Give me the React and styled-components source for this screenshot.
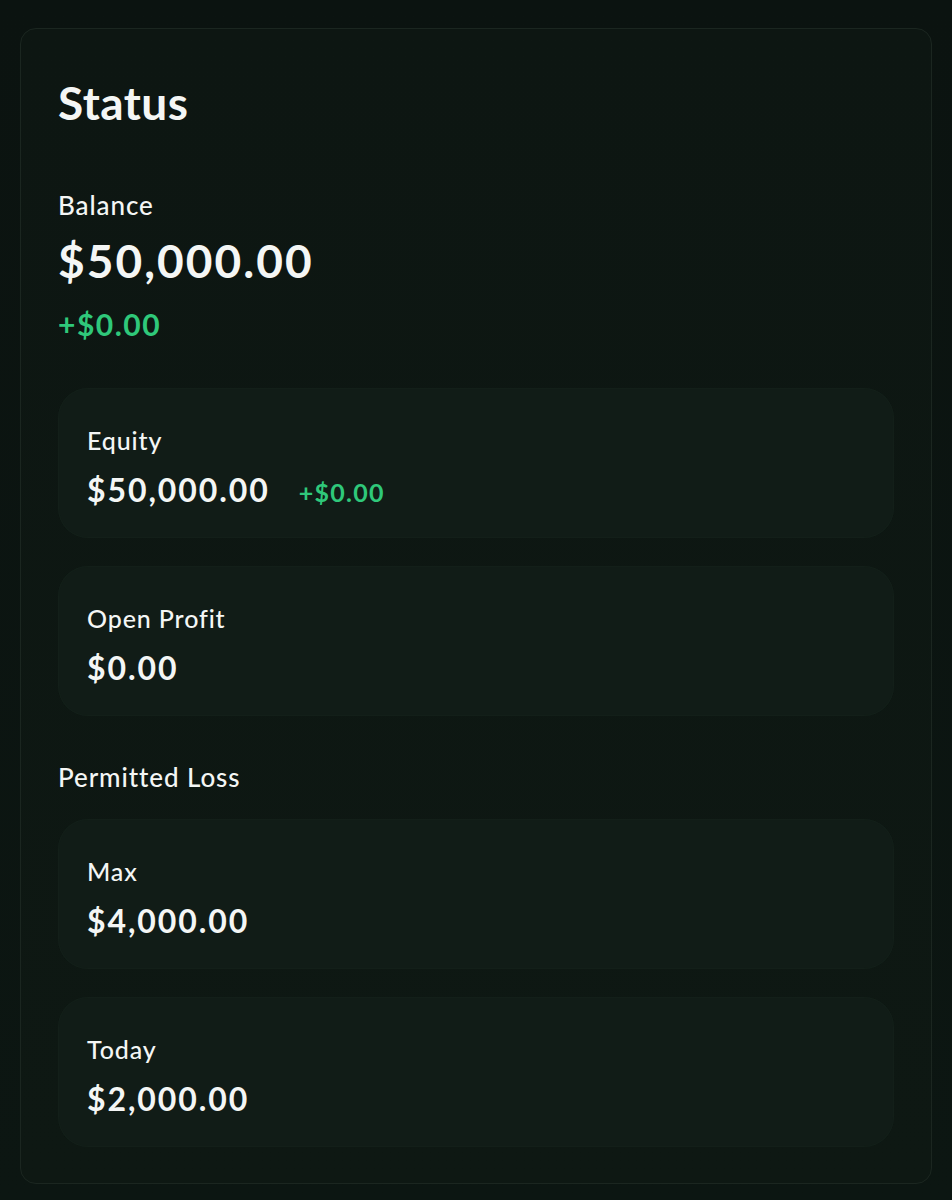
import React from "react";
import styled, { createGlobalStyle } from "styled-components";

const GlobalStyle = createGlobalStyle`
  html, body {
    margin: 0;
    padding: 0;
    background: #0b1310;
  }
  body {
    font-family: Lato, "Open Sans", sans-serif;
    color: #f4f6f5;
    -webkit-font-smoothing: antialiased;
  }
`;

const Page = styled.div`
  width: 952px;
  height: 1200px;
  box-sizing: border-box;
  padding: 28px 20px 16px 20px;
  background: linear-gradient(180deg, #0b1310 0%, #0c1612 100%);
`;

const Panel = styled.section`
  box-sizing: border-box;
  height: 1156px;
  padding: 0 37px;
  border: 1px solid #1b2620;
  border-radius: 16px;
  background: linear-gradient(180deg, #0d1612 0%, #0e1813 100%);
  display: flex;
  flex-direction: column;
`;

const Title = styled.h1`
  margin: 0;
  padding-top: 47px;
  font-size: 46px;
  line-height: 54px;
  font-weight: 700;
  letter-spacing: 0.01em;
`;

const Label = styled.div`
  font-size: 26px;
  line-height: 30px;
  font-weight: 500;
  letter-spacing: 0.035em;
  margin-top: ${(p) => p.$top || 0}px;
`;

const BigValue = styled.div`
  margin-top: 14px;
  font-size: 46px;
  line-height: 54px;
  font-weight: 700;
  letter-spacing: 0.045em;
`;

const Delta = styled.span`
  color: #2fc87a;
  font-size: ${(p) => p.$size}px;
  font-weight: 700;
  letter-spacing: 0.05em;
`;

const BalanceDelta = styled.div`
  margin-top: 19px;
  line-height: 34px;
`;

const Stack = styled.div`
  display: flex;
  flex-direction: column;
  gap: 28px;
  margin-top: ${(p) => p.$top}px;
`;

const Tile = styled.div`
  box-sizing: border-box;
  height: 150px;
  padding: 37px 29px 0 29px;
  border-radius: 30px;
  background: #111c17;
  box-shadow: inset 0 0 0 1px #131f19;
  display: flex;
  flex-direction: column;
  gap: 17px;
`;

const TileLabel = styled.div`
  font-size: 25px;
  line-height: 30px;
  font-weight: 500;
  letter-spacing: 0.035em;
`;

const TileRow = styled.div`
  display: flex;
  align-items: baseline;
  gap: 29px;
`;

const TileValue = styled.div`
  font-size: 32px;
  line-height: 36px;
  font-weight: 700;
  letter-spacing: 0.06em;
`;

const tiles = {
  top: [
    { label: "Equity", value: "$50,000.00", delta: "+$0.00" },
    { label: "Open Profit", value: "$0.00" },
  ],
  loss: [
    { label: "Max", value: "$4,000.00" },
    { label: "Today", value: "$2,000.00" },
  ],
};

function StatTile({ label, value, delta }) {
  return (
    <Tile>
      <TileLabel>{label}</TileLabel>
      <TileRow>
        <TileValue>{value}</TileValue>
        {delta && <Delta $size={25}>{delta}</Delta>}
      </TileRow>
    </Tile>
  );
}

export default function App() {
  return (
    <>
      <GlobalStyle />
      <Page>
        <Panel>
          <Title>Status</Title>
          <Label $top={60}>Balance</Label>
          <BigValue>$50,000.00</BigValue>
          <BalanceDelta>
            <Delta $size={30}>+$0.00</Delta>
          </BalanceDelta>
          <Stack $top={41}>
            {tiles.top.map((t) => (
              <StatTile key={t.label} {...t} />
            ))}
          </Stack>
          <Label $top={46}>Permitted Loss</Label>
          <Stack $top={27}>
            {tiles.loss.map((t) => (
              <StatTile key={t.label} {...t} />
            ))}
          </Stack>
        </Panel>
      </Page>
    </>
  );
}
